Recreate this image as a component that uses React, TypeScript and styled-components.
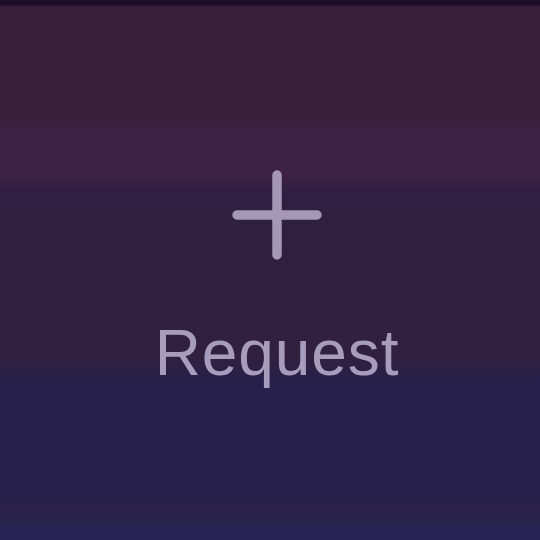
import styled, { createGlobalStyle } from "styled-components";

const GlobalStyle = createGlobalStyle`
  html, body {
    margin: 0;
    padding: 0;
    background: #2f1f42;
  }
`;

const Screen = styled.div`
  width: 540px;
  height: 540px;
  display: flex;
  flex-direction: column;
  align-items: center;
  padding: 170px 0 0 14px;
  box-sizing: border-box;
  font-family: "Liberation Sans", Arial, sans-serif;
  background: linear-gradient(
    to bottom,
    #1c0e28 0px,
    #1c0e28 4px,
    #3b1f3b 7px,
    #3b1f3c 120px,
    #3f2148 134px,
    #3e2147 176px,
    #2f1f42 192px,
    #31203f 358px,
    #26204a 380px,
    #26204a 496px,
    #2c2148 508px,
    #27244a 520px,
    #282456 530px,
    #282456 540px
  );
`;

const PlusIcon = styled.svg`
  width: 90px;
  height: 90px;
  display: block;
`;

const Label = styled.div`
  margin-top: 61px;
  font-size: 64px;
  line-height: 64px;
  color: #a89cbc;
  letter-spacing: 0.9px;
`;

export default function App() {
  return (
    <>
      <GlobalStyle />
      <Screen>
        <PlusIcon viewBox="0 0 90 90">
          <path
            d="M45 5 V85 M5 45 H85"
            stroke="#a497b7"
            strokeWidth="9.5"
            strokeLinecap="round"
            fill="none"
          />
        </PlusIcon>
        <Label>Request</Label>
      </Screen>
    </>
  );
}
